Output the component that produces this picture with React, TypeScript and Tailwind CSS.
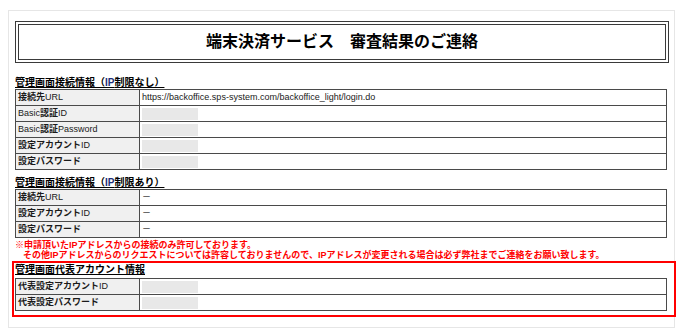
import React from "react";

const FONT = { fontFamily: '"Liberation Sans", "Noto Sans CJK JP", sans-serif' };

function Label({ t }: { t: string }) {
  const parts = t.split(/([A-Za-z]+)/).filter((s) => s.length > 0);
  return (
    <>
      {parts.map((s, i) =>
        /[A-Za-z]/.test(s) ? (
          <span key={i}>{s}</span>
        ) : (
          <span key={i} className="font-bold">
            {s}
          </span>
        )
      )}
    </>
  );
}

type Row = { label: string; value?: string; blank?: boolean };

function Table({ rows }: { rows: Row[] }) {
  return (
    <div className="grid w-[652px] grid-cols-[124px_1fr] border-l border-t border-[#4a4a4a]">
      {rows.map((r, i) => (
        <React.Fragment key={i}>
          <div className="flex h-[16px] items-center border-b border-r border-[#4a4a4a] bg-[#f0f0f0] pl-[2px] text-[9px] leading-none text-[#1a1a1a]">
            <Label t={r.label} />
          </div>
          <div className="flex h-[16px] items-center border-b border-r border-[#4a4a4a] bg-white pl-[2px] text-[9px] leading-none text-[#1a1a1a]">
            {r.blank ? (
              <div className="h-[12px] w-[56px] bg-[#e8e8e8]" />
            ) : (
              <span>{r.value}</span>
            )}
          </div>
        </React.Fragment>
      ))}
    </div>
  );
}

function Heading({ pre, ip, post }: { pre: string; ip?: string; post?: string }) {
  return (
    <div className="h-[12px] text-[10px] font-bold leading-[12px] text-black">
      <span className="underline decoration-1 underline-offset-[1px]">
        {pre}
        {ip && <span className="text-[#1e2f7a]">{ip}</span>}
        {post}
      </span>
    </div>
  );
}

export default function App() {
  return (
    <div className="h-[336px] w-[688px] bg-white pl-[8px] pt-[10px]" style={FONT}>
      <div className="h-[318px] w-[667px] border border-[#e6e6e6] bg-white pl-[6px] pt-[10px]">
        <div className="flex h-[42px] w-[654px] items-center justify-center border-4 border-double border-[#3a3a3a]">
          <span className="text-[16px] font-bold leading-none text-black">
            端末決済サービス　審査結果のご連絡
          </span>
        </div>

        <div className="mt-[14px]">
          <Heading pre="管理画面接続情報（" ip="IP" post="制限なし）" />
        </div>
        <Table
          rows={[
            { label: "接続先URL", value: "https://backoffice.sps-system.com/backoffice_light/login.do" },
            { label: "Basic認証ID", blank: true },
            { label: "Basic認証Password", blank: true },
            { label: "設定アカウントID", blank: true },
            { label: "設定パスワード", blank: true },
          ]}
        />

        <div className="mt-[7px]">
          <Heading pre="管理画面接続情報（" ip="IP" post="制限あり）" />
        </div>
        <Table
          rows={[
            { label: "接続先URL", value: "－" },
            { label: "設定アカウントID", value: "－" },
            { label: "設定パスワード", value: "－" },
          ]}
        />

        <div className="mt-[2px] text-[9px] font-bold leading-[10px] text-[#ff0000]">
          <div>※申請頂いたIPアドレスからの接続のみ許可しております。</div>
          <div className="pl-[8px]">
            その他IPアドレスからのリクエストについては許容しておりませんので、IPアドレスが変更される場合は必ず弊社までご連絡をお願い致します。
          </div>
        </div>

        <div className="-ml-[3px] mt-[1px] h-[56px] w-[664px] border-2 border-[#ff0000] pl-[1px] pt-[1px]">
          <Heading pre="管理画面代表アカウント情報" />
          <div className="mt-[2px]">
            <Table
              rows={[
                { label: "代表設定アカウントID", blank: true },
                { label: "代表設定パスワード", blank: true },
              ]}
            />
          </div>
        </div>
      </div>
    </div>
  );
}
